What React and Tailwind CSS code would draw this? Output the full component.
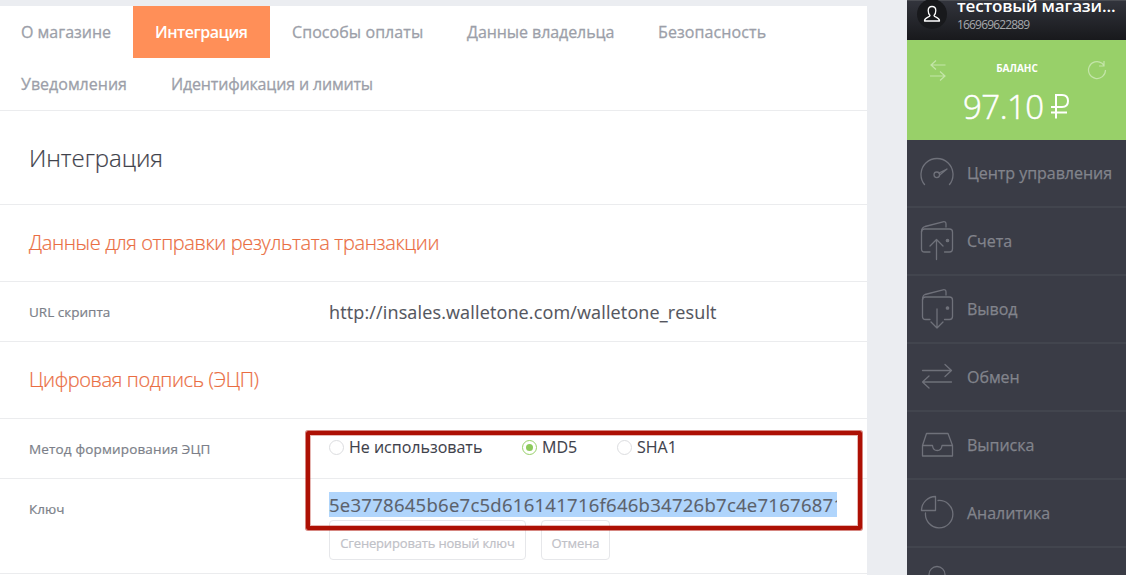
import React from "react";

const menu = [
  {
    label: "Центр управления",
    icon: (
      <>
        <path d="M4.500 32.500A16 16 0 1 1 29.500 32.500" />
        <circle cx="16.800" cy="22.800" r="2.800" />
        <path d="M19 21 27 17 20 22.800" />
      </>
    ),
  },
  {
    label: "Счета",
    icon: (
      <>
        <path d="M10 32H4.500Q1.500 32 1.500 29V12Q1.500 9 4.500 9H29.500Q32.500 9 32.500 12V29Q32.500 32 29.500 32H24.500" />
        <path d="M1.500 12Q1.500 7.500 5 6.500L23 1.800Q26 1.300 26 4V7" />
        <path d="M16.500 39.500V20M10 26 16.500 19.500 23 26" />
        <circle cx="27.500" cy="20.500" r="1.200" fill="currentColor" />
      </>
    ),
  },
  {
    label: "Вывод",
    icon: (
      <>
        <path d="M10 31.500H5.500Q2.500 31.500 2.500 28.500V12Q2.500 9 5.500 9H29.500Q32.500 9 32.500 12V28.500Q32.500 31.500 29.500 31.500H24.500" />
        <path d="M2.500 12Q2.500 7.500 5 6.500L23 1.800Q26 1.300 26 4V7" />
        <path d="M17 21V40M11 34 17 40 23 34" />
        <circle cx="27.500" cy="20" r="1.200" fill="currentColor" />
      </>
    ),
  },
  {
    label: "Обмен",
    icon: (
      <>
        <path d="M2.500 14.500H31.500M25 8.500 31.500 14.500 25 20.500" />
        <path d="M31.500 26H2.500M9 20 2.500 26 9 32" />
      </>
    ),
  },
  {
    label: "Выписка",
    icon: (
      <path d="M6.500 9.500H28L32.500 21.500V32H2.500V21.500ZM2.500 21.500H12.500Q13 26.500 17.200 26.500T22 21.500H32.500" />
    ),
  },
  {
    label: "Аналитика",
    icon: (
      <>
        <path d="M1.500 18.500A14 14 0 0 1 15.500 4.500V18.500Z" />
        <path d="M18 8.500A13.700 13.700 0 1 1 5.500 21" />
      </>
    ),
  },
];

function Tab({ children, active, className }) {
  return (
    <div
      className={
        "flex h-[52px] shrink-0 items-center whitespace-nowrap text-base " +
        (active
          ? "bg-[#ff8f58] font-semibold tracking-[-0.5px] text-white "
          : "text-[#9c9fa9] [-webkit-text-stroke:0.3px_#9c9fa9] ") +
        className
      }
    >
      {children}
    </div>
  );
}

function Radio({ label, checked, className }) {
  return (
    <div className={"flex items-center gap-[5px] " + className}>
      <span
        className={
          "flex size-[15px] items-center justify-center rounded-full border " +
          (checked ? "border-[#98d069]" : "border-[#dcdde0]")
        }
      >
        {checked && <span className="size-[7px] rounded-full bg-[#8cca5b]" />}
      </span>
      <span className="whitespace-nowrap text-base leading-6 text-[#3f424b] [-webkit-text-stroke:0.1px_#3f424b]">{label}</span>
    </div>
  );
}

function Button({ children, className }) {
  return (
    <button
      className={
        "flex h-10 items-end justify-center rounded-[4px] border border-[#e6e7ea] bg-white pb-[7px] text-[13px] leading-[18px] whitespace-nowrap text-[#bfc1c7] [-webkit-text-stroke:0.2px_#bfc1c7] " +
        className
      }
    >
      {children}
    </button>
  );
}

function Label({ children, className }) {
  return (
    <span className={"w-[300px] text-[13.5px] text-[#7c7f89] [-webkit-text-stroke:0.2px_#7c7f89] " + className}>
      {children}
    </span>
  );
}

function SectionTitle({ children }) {
  return (
    <h2 className="flex h-[77px] items-center border-b border-[#ebecee] pl-[29px] text-xl font-light tracking-[-0.37px] text-[#ea6d42] [-webkit-text-stroke:0.2px_#ea6d42]">
      {children}
    </h2>
  );
}

export default function App() {
  return (
    <div className="relative flex h-[575px] w-[1126px] overflow-hidden bg-[#ebedf1] font-['Open_Sans',sans-serif]">
      <main className="mt-1.5 h-[569px] w-[867px] bg-white text-[#4c4f58]">
        <nav className="h-[105px] border-b border-[#ebecee]">
          <div className="flex">
            <Tab className="w-[133px] pl-[21px]">О магазине</Tab>
            <Tab active className="w-[137px] pl-[22px]">Интеграция</Tab>
            <Tab className="w-[175px] pl-[22px] tracking-[0.07px]">Способы оплаты</Tab>
            <Tab className="w-[191px] pl-[22px] tracking-[-0.07px]">Данные владельца</Tab>
            <Tab className="pl-[22px] tracking-[0.1px]">Безопасность</Tab>
          </div>
          <div className="flex">
            <Tab className="w-[149px] pl-[21px]">Уведомления</Tab>
            <Tab className="pl-[22px] tracking-[-0.16px]">Идентификация и лимиты</Tab>
          </div>
        </nav>
        <h1 className="flex h-[94px] items-center border-b border-[#ebecee] pl-[29px] text-2xl font-light tracking-[-0.05px] text-[#3f424b] [-webkit-text-stroke:0.2px_#3f424b]">
          Интеграция
        </h1>
        <SectionTitle>Данные для отправки результата транзакции</SectionTitle>
        <div className="flex h-[60px] items-center border-b border-[#ebecee] pl-[29px]">
          <Label className="pt-px">URL скрипта</Label>
          <span className="text-lg tracking-[0.14px] text-[#54565e] [-webkit-text-stroke:0.1px_#54565e]">
            http://insales.walletone.com/walletone_result
          </span>
        </div>
        <SectionTitle>Цифровая подпись (ЭЦП)</SectionTitle>
        <div className="flex h-[60px] items-center border-b border-[#ebecee] pl-[29px]">
          <Label className="pt-px tracking-[0.16px]">Метод формирования ЭЦП</Label>
          <div className="flex pb-[3px]">
            <Radio label="Не использовать" className="w-[193px]" />
            <Radio label="MD5" checked className="w-[95px]" />
            <Radio label="SHA1" className="" />
          </div>
        </div>
        <div className="flex h-[95px] border-b border-[#ebecee] pl-[29px]">
          <Label className="pt-[21px] leading-[18px]">Ключ</Label>
          <div className="pt-[13px]">
            <div className="h-[25px] w-[508px] overflow-hidden whitespace-nowrap bg-[#b0d5fc] text-[18.5px] leading-[26px] tracking-[0.27px] text-[#5b616b] [-webkit-text-stroke:0.15px_#5b616b]">
              5e3778645b6e7c5d616141716f646b34726b7c4e71676871
            </div>
            <div className="mt-[3px] flex gap-[15px]">
              <Button className="w-[197px] tracking-[-0.17px]">Сгенерировать новый ключ</Button>
              <Button className="w-[69px] tracking-[-0.1px]">Отмена</Button>
            </div>
          </div>
        </div>
      </main>

      <aside className="ml-10 flex h-[575px] w-[219px] flex-col overflow-hidden bg-[#3a3c46]">
        <header className="flex h-10 shrink-0 border-t border-[#4a4c52] bg-linear-to-b from-[#32343c] to-[#18191c] pl-[10px]">
          <div className="-mt-[2px] flex size-[30px] shrink-0 items-center justify-center rounded-full bg-[#18191c]">
            <svg width="18" height="18" viewBox="0 0 18 18" fill="none" stroke="white" strokeWidth="1.3" strokeLinejoin="round">
              <path d="M7 10.500C5.500 9 5.200 7.500 5.200 5.500C5.200 3 6.500 1.500 9 1.500S12.800 3 12.800 5.500C12.800 7.500 12.500 9 11 10.500C11 12.500 16.500 12 16.500 16H1.500C1.500 12 7 12.500 7 10.500Z" />
            </svg>
          </div>
          <div className="-mt-[6px] ml-[10px] whitespace-nowrap">
            <div className="text-[17px] leading-[22px] font-semibold tracking-[-0.15px] text-white">тестовый магази...</div>
            <div className="text-xs leading-[15px] tracking-[-0.83px] text-[#a6a8ad]">166969622889</div>
          </div>
        </header>
        <section className="flex h-[100px] shrink-0 bg-[#98d069]">
          <svg className="mt-[18px] ml-[23px] shrink-0" width="17" height="24" viewBox="0 0 17 24" fill="none" stroke="#c4e5a9" strokeWidth="1.2">
            <path d="M15.500 7H1M6 2.500 1 7 6 11.500M0 18H15M10 13.500 15 18 10 22.500" />
          </svg>
          <div className="w-[140px] pt-[21px] text-white">
            <div className="text-center text-[10px] leading-[14px] font-bold">БАЛАНС</div>
            <div className="mt-[9px] flex items-center pl-[16px] text-[33px] leading-[46px] font-light">
              <span className="w-[88px] tracking-[-0.5px] [-webkit-text-stroke:0.5px_white]">97.10</span>
              <svg className="-mt-px shrink-0" width="19" height="25" viewBox="0 0 19 25" fill="none" stroke="white" strokeWidth="2">
                <path d="M5 24.500V1H11Q17 1 17 7T11 13H0M0 18.500H16" />
              </svg>
            </div>
          </div>
          <svg className="mt-[20px] shrink-0" width="20" height="20" viewBox="0 0 20 20" fill="none" stroke="#c4e5a9" strokeWidth="1.2">
            <path d="M18.500 10A8.500 8.500 0 1 1 15 3.200L17 5.500M17 1V6H12" />
          </svg>
        </section>
        {menu.map((item) => (
          <div key={item.label} className="flex h-[68px] shrink-0 items-center border-b-2 border-[#42454e] pl-[13px] text-[#82848c]">
            <svg className="shrink-0 text-[#6f717a]" width="36" height="42" viewBox="0 0 36 42" fill="none" stroke="currentColor" strokeWidth="1.3" strokeLinecap="round" strokeLinejoin="round">
              {item.icon}
            </svg>
            <span className="ml-[11px] text-base whitespace-nowrap tracking-[-0.03px] [-webkit-text-stroke:0.25px_#82848c]">{item.label}</span>
          </div>
        ))}
        <div className="flex h-[68px] shrink-0 pt-[17px] pl-[21px]">
          <svg width="18" height="24" viewBox="0 0 18 24" fill="none" stroke="#6f717a" strokeWidth="1.3">
            <circle cx="9" cy="9.500" r="8" />
          </svg>
        </div>
      </aside>

      <div className="pointer-events-none absolute top-[431px] left-[306px] h-[99px] w-[556px] rounded-[2px] border-4 border-[#ad1004] shadow-[0_0_0_1px_rgba(173,16,4,0.5),inset_0_0_0_1px_rgba(173,16,4,0.3)]" />
    </div>
  );
}
